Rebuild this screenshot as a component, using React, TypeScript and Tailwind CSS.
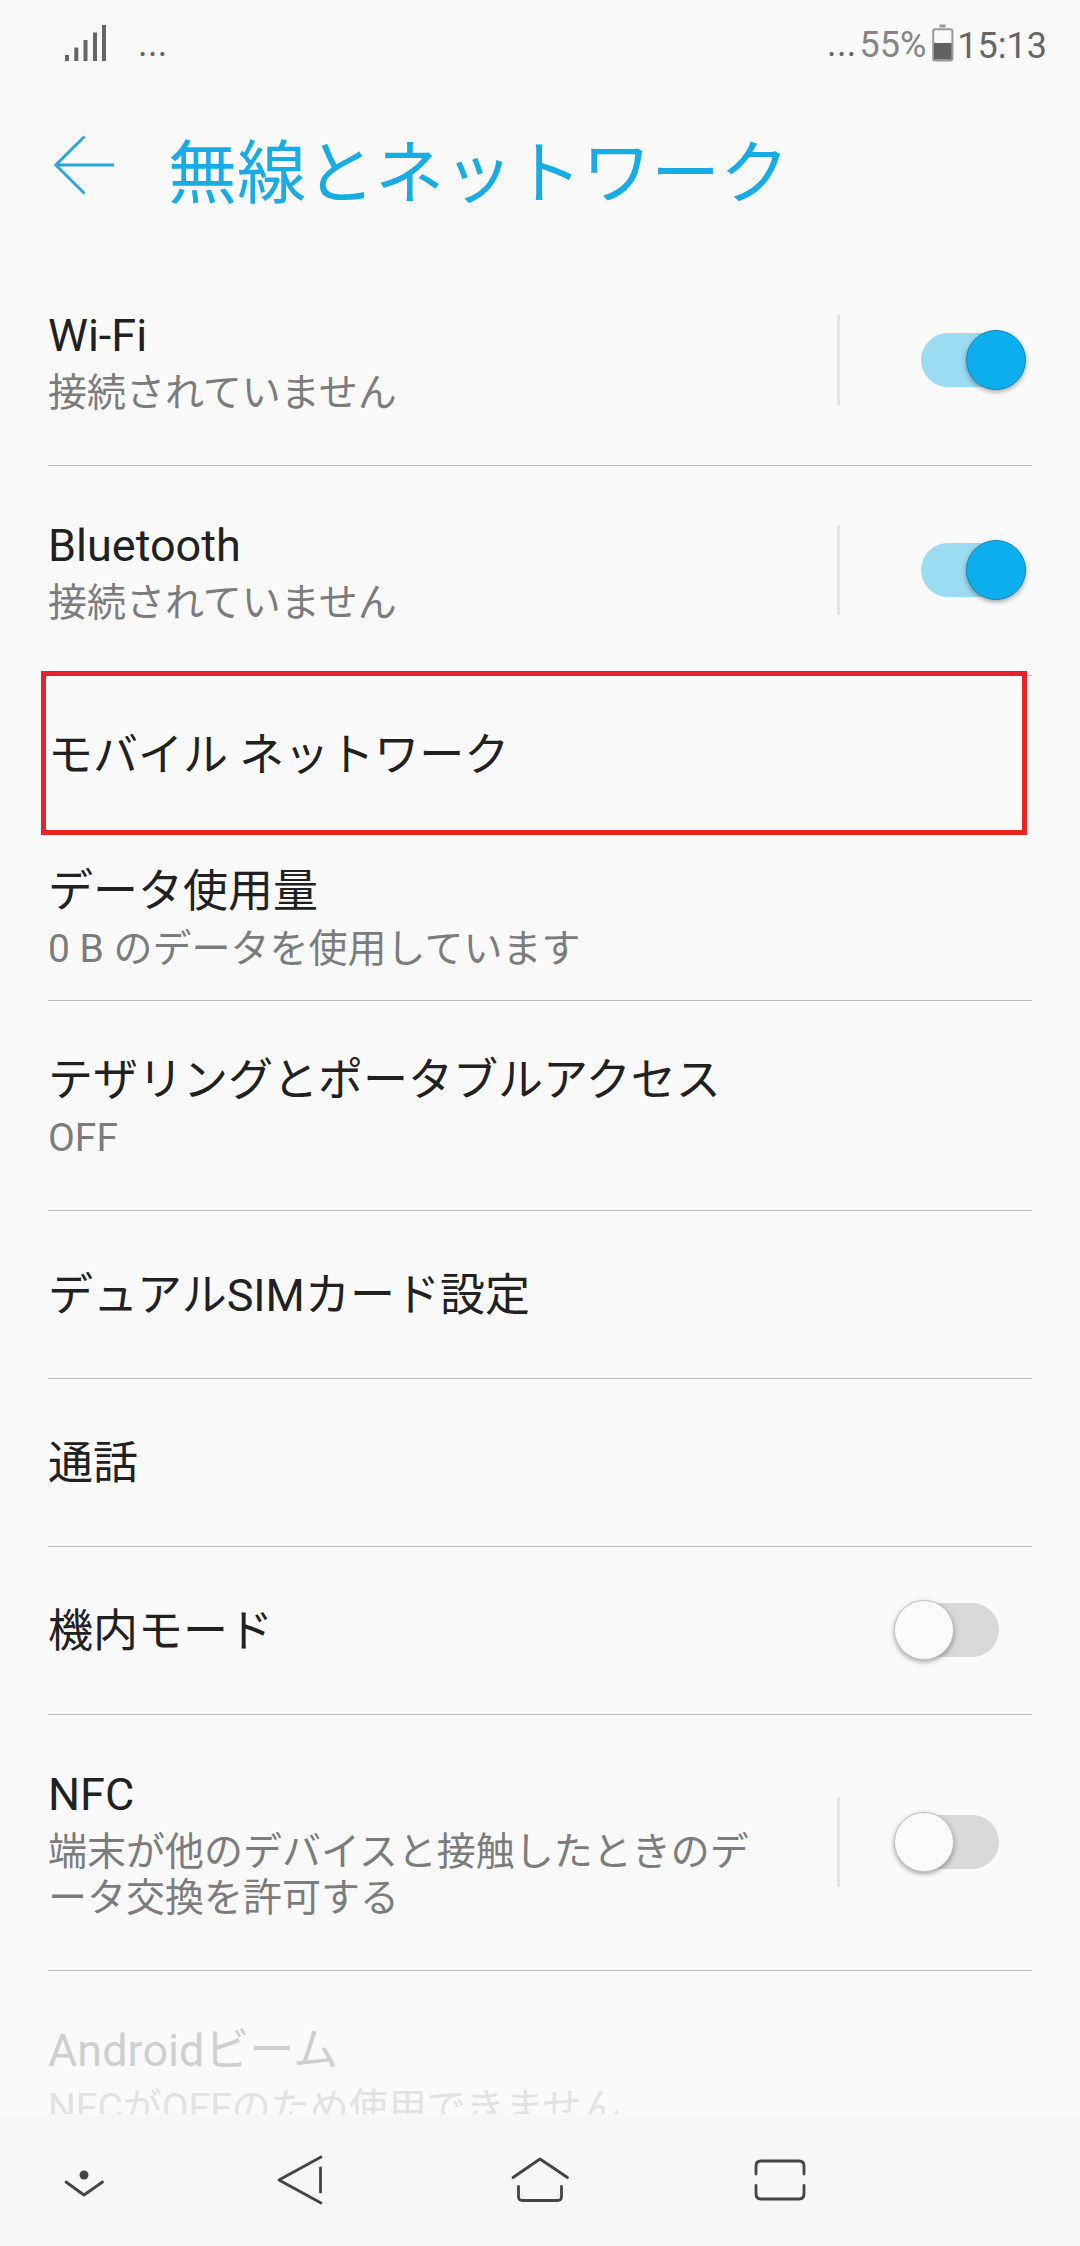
import type { ReactNode } from "react";

function Switch({ on }: { on: boolean }) {
  return on ? (
    <div className="relative h-[60px] w-[105px] py-[3px] pr-[3px]">
      <div className="h-[54px] rounded-full bg-[#9bdcf3]" />
      <div className="absolute top-0 right-0 size-[60px] rounded-full border border-[#1586b8] bg-[#0cafee] shadow-[0_2px_5px_rgba(0,0,0,0.35)]" />
    </div>
  ) : (
    <div className="relative h-[60px] w-[105px] py-[3px] pl-[3px]">
      <div className="h-[54px] rounded-full bg-[#d9d9d9]" />
      <div className="absolute top-0 left-0 size-[60px] rounded-full border border-[#c4c4c4] bg-[#fbfbfb] shadow-[0_2px_5px_rgba(0,0,0,0.35)]" />
    </div>
  );
}

type RowProps = {
  title: string;
  sub?: ReactNode;
  height: string;
  textTop: string;
  control?: ReactNode;
  separator?: boolean;
  disabled?: boolean;
};

function Row({ title, sub, height, textTop, control, separator, disabled }: RowProps) {
  return (
    <div className={`flex shrink-0 justify-between border-b border-[#bcbcbc] ${height}`}>
      <div className={`w-[740px] shrink-0 ${textTop}`}>
        <div className={`text-[45px] leading-[53px] whitespace-nowrap ${disabled ? "text-[#cfcfcf]" : "text-[#212121]"}`}>{title}</div>
        {sub && (
          <div className={`mt-[8px] text-[39px] leading-[46px] whitespace-nowrap ${disabled ? "text-[#e2e2e2]" : "text-[#7c7c7c]"}`}>{sub}</div>
        )}
      </div>
      {control && (
        <div className="mb-px flex h-[90px] items-center self-center">
          {separator && <div className="h-[90px] w-[3px] bg-[#e5e5e5]" />}
          {control}
        </div>
      )}
    </div>
  );
}

export default function App() {
  return (
    <div className="flex h-[2246px] w-[1080px] flex-col overflow-hidden bg-[#fafafa] font-[Roboto,'Noto_Sans_CJK_JP',sans-serif]">
      <header className="flex h-[90px] shrink-0 items-start justify-between pr-[33px] pl-[65px] text-[36px] leading-[42px]">
        <div className="flex items-start text-[#666]">
          <svg className="mt-[25px]" width="41" height="36" viewBox="0 0 41 36" fill="#666">
            <rect x="0" y="30" width="4" height="6" />
            <rect x="9.3" y="22.5" width="4" height="13.5" />
            <rect x="18.5" y="15" width="4" height="21" />
            <rect x="28" y="7.5" width="4" height="28.5" />
            <rect x="37" y="0" width="4" height="36" />
          </svg>
          <span className="mt-[23px] ml-[32px] tracking-[0.4px]">...</span>
        </div>
        <div className="flex items-start">
          <span className="mt-[23px] tracking-[0.3px] text-[#666]">...</span>
          <span className="mt-[24px] ml-[3px] text-[#858585]">55%</span>
          <svg className="mt-[24px] ml-[6px]" width="22" height="38" viewBox="0 0 22 38">
            <rect x="7.5" y="0.5" width="6" height="3" fill="#999" />
            <rect x="1.2" y="5.2" width="19.2" height="31.2" rx="2" fill="none" stroke="#999" strokeWidth="2" />
            <rect x="2" y="19" width="17.6" height="16.5" fill="#626262" />
          </svg>
          <span className="mt-[25px] ml-[3px] text-[#666]">15:13</span>
        </div>
      </header>

      <div className="flex h-[166px] shrink-0 items-start pl-[53px]">
        <svg className="mt-[44px]" width="62" height="62" viewBox="0 0 62 62" fill="none" stroke="#27a6de" strokeWidth="2.8">
          <path d="M31.5 2.5 2.8 31l28.7 28.5M2.8 31H61" />
        </svg>
        <h1 className="mt-[45px] ml-[53px] text-[69px] leading-[80px] text-[#18ace6]">無線とネットワーク</h1>
      </div>

      <main className="flex min-h-0 flex-1 flex-col overflow-hidden px-[48px]">
        <Row title="Wi-Fi" sub="接続されていません" height="h-[210px]" textTop="pt-[53px]" separator control={<div className="mr-[6px] ml-[81px]"><Switch on /></div>} />
        <Row title="Bluetooth" sub="接続されていません" height="h-[210px]" textTop="pt-[53px]" separator control={<div className="mr-[6px] ml-[81px]"><Switch on /></div>} />
        <div className="relative flex h-[159px] shrink-0 items-center">
          <div className="text-[45px] leading-[53px] text-[#212121]">モバイル ネットワーク</div>
          <div className="absolute -top-[5px] -left-[7px] h-[164px] w-[986px] border-[5px] border-[#e8212a]" />
        </div>
        <Row title="データ使用量" sub="0 B のデータを使用しています" height="h-[166px]" textTop="pt-[30px]" />
        <Row title="テザリングとポータブルアクセス" sub="OFF" height="h-[210px]" textTop="pt-[53px]" />
        <Row title="デュアルSIMカード設定" height="h-[168px]" textTop="pt-[58px]" />
        <Row title="通話" height="h-[168px]" textTop="pt-[58px]" />
        <Row title="機内モード" height="h-[168px]" textTop="pt-[58px]" control={<div className="mr-[33px]"><Switch on={false} /></div>} />
        <Row
          title="NFC"
          sub={<>端末が他のデバイスと接触したときのデ<br />ータ交換を許可する</>}
          height="h-[256px]"
          textTop="pt-[53px]"
          separator
          control={<div className="mr-[33px] ml-[54px]"><Switch on={false} /></div>}
        />
        <Row title="Androidビーム" sub="NFCがOFFのため使用できません" height="h-[210px]" textTop="pt-[53px]" disabled />
      </main>

      <nav className="flex h-[132px] shrink-0 items-center bg-[#f7f7f7] pl-[54px]">
        <svg width="60" height="60" viewBox="54 2150 60 60" fill="none" stroke="#444" strokeWidth="2.8" strokeLinecap="round" strokeLinejoin="round">
          <circle cx="84" cy="2175" r="4.5" fill="#444" stroke="none" />
          <path d="M66 2182l18 13 18.500-13" />
        </svg>
        <svg className="ml-[156px]" width="60" height="60" viewBox="270 2150 60 60" fill="none" stroke="#444" strokeWidth="2.8" strokeLinecap="round" strokeLinejoin="round">
          <path d="M321 2157l-42 23 42 23M320.500 2168v24" />
        </svg>
        <svg className="ml-[180px]" width="60" height="60" viewBox="510 2150 60 60" fill="none" stroke="#444" strokeWidth="2.8" strokeLinecap="round" strokeLinejoin="round">
          <path d="M513 2177.500l27-18.500 27.500 18.500M518.500 2186.500v10q0 4 4 4h35q4 0 4-4v-10" />
        </svg>
        <svg className="ml-[180px]" width="60" height="60" viewBox="750 2150 60 60" fill="none" stroke="#444" strokeWidth="2.8" strokeLinecap="round" strokeLinejoin="round">
          <path d="M756 2174v-8q0-5 5-5h38q5 0 5 5v8M756 2185.500v8q0 5.500 5 5.500h38q5 0 5-5.500v-8" />
        </svg>
      </nav>
    </div>
  );
}
